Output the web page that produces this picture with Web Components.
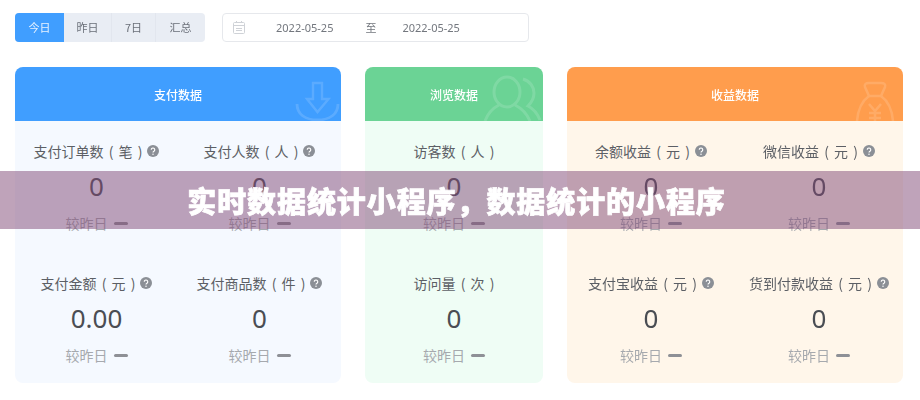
<!DOCTYPE html>
<html>
<head>
<meta charset="utf-8">
<style>
  html, body { margin: 0; height: 100%; }
  body {
    width: 920px;
    height: 400px;
    overflow: hidden;
    background: #fff;
    font-family: "Noto Sans CJK SC", "Noto Sans", sans-serif;
    position: relative;
  }
  .page { padding: 12px 17px 0 15px; filter: blur(.45px); }
  .toolbar { display: flex; align-items: center; gap: 17px; height: 30px; margin-bottom: 25px; }
  .cards { display: grid; grid-template-columns: 326px 178px 336px; column-gap: 24px; }
</style>
</head>
<body>
<div class="page">
  <div class="toolbar">
    <range-tabs></range-tabs>
    <date-range from="2022-05-25" to="2022-05-25"></date-range>
  </div>
  <div class="cards">
    <data-card title="支付数据" icon="down" head="#409eff" body="#f5f9ff">
      <metric-cell label="支付订单数 ( 笔 )" value="0" tip></metric-cell>
      <metric-cell label="支付人数 ( 人 )" value="0" tip></metric-cell>
      <metric-cell label="支付金额 ( 元 )" value="0.00" tip></metric-cell>
      <metric-cell label="支付商品数 ( 件 )" value="0" tip></metric-cell>
    </data-card>
    <data-card title="浏览数据" icon="user" head="#6bd395" body="#effdf5" cols="1">
      <metric-cell label="访客数 ( 人 )" value="0"></metric-cell>
      <metric-cell label="访问量 ( 次 )" value="0"></metric-cell>
    </data-card>
    <data-card title="收益数据" icon="bag" head="#ff9d4d" body="#fff6ea">
      <metric-cell label="余额收益 ( 元 )" value="0" tip></metric-cell>
      <metric-cell label="微信收益 ( 元 )" value="0" tip></metric-cell>
      <metric-cell label="支付宝收益 ( 元 )" value="0" tip></metric-cell>
      <metric-cell label="货到付款收益 ( 元 )" value="0" tip></metric-cell>
    </data-card>
  </div>
</div>
<title-banner>实时数据统计小程序，数据统计的小程序</title-banner>

<script>
class RangeTabs extends HTMLElement {
  constructor() {
    super();
    this.attachShadow({ mode: 'open' });
  }

  connectedCallback() {
    const tabs = [['今日', 49], ['昨日', 48], ['7日', 44], ['汇总', 49]];
    this.shadowRoot.innerHTML = `
      <style>
        :host { display: flex; height: 29px; border-radius: 4px; overflow: hidden; background: #e9edf4; }
        div {
          display: flex; align-items: center; justify-content: center;
          font-size: 11px; color: #6a6f78;
          border-right: 1px solid #e2e6ee; box-sizing: border-box;
        }
        div:last-child { border-right: 0; }
        .on { background: #409eff; color: #e8f3ff; border-right: 0; }
      </style>
      ${tabs.map(([t, w], i) =>
        `<div class="${i === 0 ? 'on' : ''}" style="width:${w}px">${t}</div>`
      ).join('')}`;
  }
}

class DateRange extends HTMLElement {
  constructor() {
    super();
    this.attachShadow({ mode: 'open' });
  }

  connectedCallback() {
    this.shadowRoot.innerHTML = `
      <style>
        :host {
          display: flex; align-items: center; width: 307px; height: 29px;
          box-sizing: border-box; border: 1px solid #e6e8ec; border-radius: 4px;
          font-size: 11px; color: #73777e; background: #fff;
          font-family: "Noto Sans", "Noto Sans CJK SC", sans-serif;
        }
        svg { margin-left: 10px; width: 12px; height: 13px; flex: none; }
        .a { margin-left: 31px; }
        .to { margin-left: 32px; }
        .b { margin-left: 26px; }
      </style>
      <svg viewBox="0 0 12 13" fill="none" stroke="#cfd2d7" stroke-width="1">
        <rect x=".5" y="1.5" width="11" height="11" rx="1"/>
        <path d="M.5 4.5h11M3 7.5h6M3 9.5h6M3.5 0v2M8.5 0v2"/>
      </svg>
      <span class="a">${this.getAttribute('from')}</span>
      <span class="to">至</span>
      <span class="b">${this.getAttribute('to')}</span>`;
  }
}

const cardIcons = {
  down: `<svg width="50" height="50" viewBox="0 0 50 50" fill="none" stroke="#fff" stroke-width="2.4">
    <path d="M22 12h9v16h6.5L26.5 41 16 28h6z"/>
    <path d="M6 33c0 10 8 16 20.5 16S47 43 47 33" stroke-width="2.8"/>
  </svg>`,
  user: `<svg width="60" height="50" viewBox="0 0 60 50" fill="none" stroke="#fff" stroke-width="3">
    <ellipse cx="24" cy="21" rx="13" ry="15"/>
    <path d="M2 50c3-8 8-13 14-16M32 34c6 3 12 9 15 16"/>
    <path d="M40 8c7 2 11 8 11 14s-3 10-6 13c6 3 10 9 12 14"/>
  </svg>`,
  bag: `<svg width="50" height="50" viewBox="0 0 50 50" fill="none" stroke="#fff" stroke-width="2.5">
    <path d="M16 25l-4-9c-1-3 1-4 4-4h12c3 0 5 1 4 4l-4 9z"/>
    <path d="M16 25C9 30 5 38 4 50M28 25c7 5 11 13 12 25"/>
    <path d="M16 33l6 7 6-7M22 40v10M16 42h12M16 47h12"/>
  </svg>`
};

class DataCard extends HTMLElement {
  constructor() {
    super();
    this.attachShadow({ mode: 'open' });
  }

  connectedCallback() {
    const cols = this.getAttribute('cols') || 2;
    this.shadowRoot.innerHTML = `
      <style>
        :host { display: block; border-radius: 8px; overflow: hidden; height: 316px; }
        header {
          height: 54px; display: flex; align-items: center; justify-content: center;
          background: ${this.getAttribute('head')};
          color: #fff; font-size: 12px; font-weight: 500;
          overflow: hidden; position: relative;
        }
        header svg { position: absolute; right: 0; bottom: 0; opacity: .14; }
        section {
          display: grid; grid-template-columns: repeat(${cols}, 1fr);
          grid-auto-rows: 132px;
          height: 262px;
          background: ${this.getAttribute('body')};
        }
      </style>
      <header>${this.getAttribute('title')}${cardIcons[this.getAttribute('icon')]}</header>
      <section><slot></slot></section>`;
  }
}

class MetricCell extends HTMLElement {
  constructor() {
    super();
    this.attachShadow({ mode: 'open' });
  }

  connectedCallback() {
    const tip = this.hasAttribute('tip')
      ? `<svg viewBox="0 0 13 13"><circle cx="6.5" cy="6.5" r="6.5" fill="#8b8f96"/>
           <path d="M4.6 5.2a1.9 1.9 0 1 1 2.9 1.6c-.7.4-1 .7-1 1.4" fill="none" stroke="#fff" stroke-width="1.2"/>
           <circle cx="6.5" cy="10" r=".8" fill="#fff"/></svg>`
      : '';
    this.shadowRoot.innerHTML = `
      <style>
        :host { display: flex; flex-direction: column; align-items: center; padding-top: 20px; }
        .label { display: flex; align-items: center; gap: 5px; height: 20px; line-height: 20px; font-size: 14px; word-spacing: 2px; color: #5c5f65; white-space: nowrap; }
        .label svg { width: 12px; height: 12px; flex: none; }
        .value { height: 36px; margin-top: 7px; line-height: 36px; font-size: 26px; color: #4a4d53; font-family: "Noto Sans", sans-serif; }
        .diff { display: flex; align-items: center; gap: 6px; margin-top: 9px; height: 20px; font-size: 14px; color: #a6a9ae; }
        .diff i { width: 14px; height: 3px; border-radius: 2px; background: #8e9096; }
      </style>
      <div class="label"><span>${this.getAttribute('label')}</span>${tip}</div>
      <div class="value">${this.getAttribute('value')}</div>
      <div class="diff"><span>较昨日</span><i></i></div>`;
  }
}

class TitleBanner extends HTMLElement {
  constructor() {
    super();
    this.attachShadow({ mode: 'open' });
  }

  connectedCallback() {
    this.shadowRoot.innerHTML = `
      <style>
        :host {
          position: absolute; left: 0; right: 0; top: 171px; height: 58px;
          box-sizing: border-box; padding-right: 7px;
          display: flex; align-items: center; justify-content: center;
          background: rgba(127, 72, 117, .5);
          color: #fff; font-size: 29px; font-weight: 900; letter-spacing: .92px;
          font-family: "Noto Sans CJK SC", sans-serif;
          -webkit-text-stroke: .7px #fff;
        }
      </style>
      <slot></slot>`;
  }
}

customElements.define('range-tabs', RangeTabs);
customElements.define('date-range', DateRange);
customElements.define('data-card', DataCard);
customElements.define('metric-cell', MetricCell);
customElements.define('title-banner', TitleBanner);
</script>
</body>
</html>
